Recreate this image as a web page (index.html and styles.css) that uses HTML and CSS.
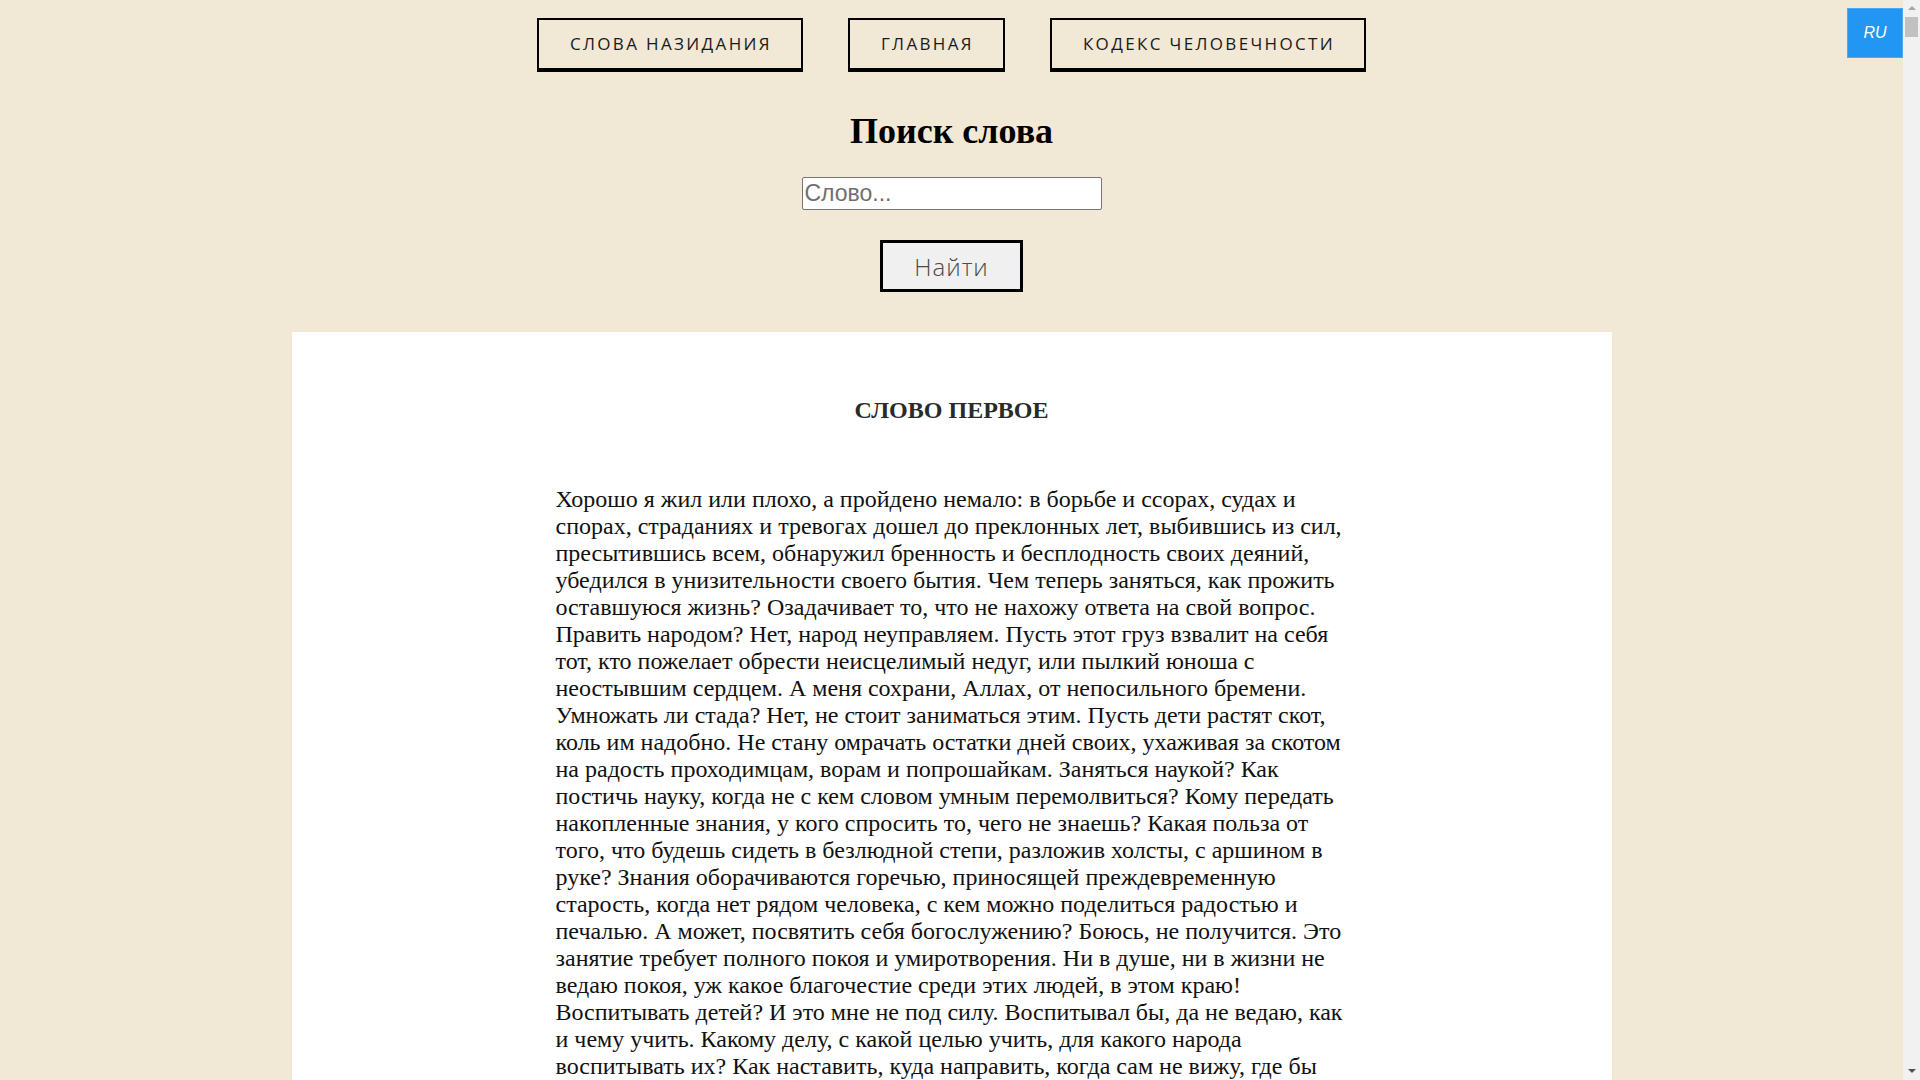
FILE: index.html
```html
<!DOCTYPE html>
<html lang="ru">
<head>
<meta charset="utf-8">
<title>Слова назидания</title>
<link rel="stylesheet" href="styles.css">
</head>
<body>
<header class="top">
  <nav class="nav">
    <a class="nav-btn" href="#">Слова назидания</a>
    <a class="nav-btn" href="#">Главная</a>
    <a class="nav-btn" href="#">Кодекс человечности</a>
  </nav>
  <h1 class="search-title">Поиск слова</h1>
  <form class="search">
    <input class="search-input" type="text" placeholder="Слово...">
    <button class="search-btn" type="button">Найти</button>
  </form>
</header>
<a class="lang" href="#">RU</a>
<div class="scrollbar" aria-hidden="true">
  <span class="sb-arrow sb-up"></span>
  <span class="sb-thumb"></span>
  <span class="sb-arrow sb-down"></span>
</div>
<main class="panel">
  <h2 class="word-title">СЛОВО ПЕРВОЕ</h2>
  <p class="word-text">Хорошо я жил или плохо, а пройдено немало: в борьбе и ссорах, судах и спорах, страданиях и тревогах дошел до преклонных лет, выбившись из сил, пресытившись всем, обнаружил бренность и бесплодность своих деяний, убедился в унизительности своего бытия. Чем теперь заняться, как прожить оставшуюся жизнь? Озадачивает то, что не нахожу ответа на свой вопрос. Править народом? Нет, народ неуправляем. Пусть этот груз взвалит на себя тот, кто пожелает обрести неисцелимый недуг, или пылкий юноша с неостывшим сердцем. А меня сохрани, Аллах, от непосильного бремени. Умножать ли стада? Нет, не стоит заниматься этим. Пусть дети растят скот, коль им надобно. Не стану омрачать остатки дней своих, ухаживая за скотом на радость проходимцам, ворам и попрошайкам. Заняться наукой? Как постичь науку, когда не с кем словом умным перемолвиться? Кому передать накопленные знания, у кого спросить то, чего не знаешь? Какая польза от того, что будешь сидеть в безлюдной степи, разложив холсты, с аршином в руке? Знания оборачиваются горечью, приносящей преждевременную старость, когда нет рядом человека, с кем можно поделиться радостью и печалью. А может, посвятить себя богослужению? Боюсь, не получится. Это занятие требует полного покоя и умиротворения. Ни в душе, ни в жизни не ведаю покоя, уж какое благочестие среди этих людей, в этом краю! Воспитывать детей? И это мне не под силу. Воспитывал бы, да не ведаю, как и чему учить. Какому делу, с какой целью учить, для какого народа воспитывать их? Как наставить, куда направить, когда сам не вижу, где бы они могли применить свои знания, не знаю, ради чего им учиться и к чему стремиться. Не могу я с уверенностью сказать: учитесь, дети, это пригодится вам в жизни.</p>
  <p class="word-text">Наконец я решил: бумага и чернила будут мне утешением, буду записывать свои мысли. Если кому-нибудь придется по душе какое-то слово, пусть перепишет или запомнит его. А если нет — мои слова останутся при мне. Больше мне ничего не остается.</p>
  <p class="word-text">Теперь у меня нет иной заботы. Подумав так, я взялся за перо. Может быть, мои скромные слова дойдут до тех, кто захочет их услышать, и помогут им найти свой путь в жизни, не растратив попусту отпущенные годы.</p>
</main>
</body>
</html>
```
FILE: styles.css
```css
html, body {
  margin: 0;
  padding: 0;
}
body {
  padding-right: 17px;
  background: #f1e8d6;
  font-family: "Liberation Serif", "Times New Roman", serif;
  color: #000;
}
.top {
  display: flex;
  flex-direction: column;
  align-items: center;
  padding-top: 18px;
}
.nav {
  display: flex;
  justify-content: center;
  gap: 45px;
}
.nav-btn {
  display: block;
  box-sizing: border-box;
  height: 54px;
  padding: 0 29px 0 31px;
  border: 2px solid #000;
  border-bottom-width: 4px;
  font-family: "Open Sans", "Liberation Sans", sans-serif;
  font-size: 17px;
  font-weight: 400;
  letter-spacing: 2.35px;
  line-height: 48px;
  text-transform: uppercase;
  text-decoration: none;
  color: #1a1a1a;
  white-space: nowrap;
}
.search-title {
  margin: 39px 0 0;
  font-size: 36px;
  font-weight: bold;
  line-height: 41px;
}
.search {
  display: flex;
  flex-direction: column;
  align-items: center;
  margin-top: 25px;
}
.search-input {
  box-sizing: border-box;
  width: 300px;
  height: 33px;
  margin: 0;
  padding: 1px 2px;
  border: 1px solid #767676;
  border-radius: 2px;
  background: #fff;
  font-family: "Liberation Sans", Arial, sans-serif;
  font-size: 23px;
  color: #000;
}
.search-input::placeholder {
  color: #6f6f6f;
}
.search-btn {
  box-sizing: border-box;
  margin-top: 30px;
  height: 52px;
  padding: 0 31px;
  border: 3px solid #000;
  border-radius: 0;
  background: #f0f0f0;
  font-family: "Open Sans", "Liberation Sans", sans-serif;
  font-size: 24px;
  font-weight: 300;
  letter-spacing: 1px;
  color: #4a4a4a;
}
.lang {
  position: fixed;
  top: 8px;
  right: 17px;
  width: 56px;
  height: 50px;
  box-sizing: border-box;
  border: 1px solid #4aa8f5;
  background: #2196f3;
  color: #fff;
  font-family: "Liberation Sans", Arial, sans-serif;
  font-style: italic;
  font-size: 16px;
  line-height: 48px;
  text-align: center;
  text-decoration: none;
}
.scrollbar {
  position: fixed;
  top: 0;
  right: 0;
  width: 17px;
  height: 100vh;
  background: #f1f1f1;
  display: flex;
  flex-direction: column;
  align-items: center;
}
.sb-arrow {
  display: block;
  width: 0;
  height: 0;
  border-left: 4px solid transparent;
  border-right: 4px solid transparent;
}
.sb-up {
  margin-top: 6px;
  border-bottom: 4px solid #a3a3a3;
}
.sb-thumb {
  display: block;
  width: 13px;
  height: 20px;
  margin-top: 7px;
  background: #c1c1c1;
}
.sb-down {
  margin-top: auto;
  margin-bottom: 7px;
  border-top: 4px solid #505050;
}
.panel {
  width: 1320px;
  margin: 40px auto 0;
  padding: 64px 0 80px;
  background: #fff;
}
.word-title {
  margin: 0;
  font-size: 24px;
  font-weight: bold;
  line-height: 28px;
  text-align: center;
  color: #2a2a2a;
}
.word-text {
  width: 60%;
  margin: 62px auto 0;
  font-size: 24px;
  line-height: 27px;
  color: #111;
}
.word-text + .word-text {
  margin-top: 20px;
}
```
